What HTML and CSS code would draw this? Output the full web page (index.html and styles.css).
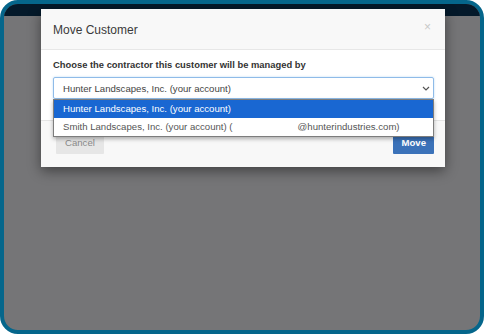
FILE: index.html
```html
<!DOCTYPE html>
<html lang="en">
<head>
    <meta charset="UTF-8">
    <title>Move Customer</title>
    <link rel="stylesheet" href="styles.css">
</head>
<body>
<div class="frame">
    <div class="navbar"></div>

    <div class="modal">
        <div class="modal-header">
            <h4 class="modal-title">Move Customer</h4>
            <span class="close">&times;</span>
        </div>
        <div class="modal-body">
            <label class="label">Choose the contractor this customer will be managed by</label>
            <div class="select">
                <span class="select-text">Hunter Landscapes, Inc. (your account)</span>
                <svg class="chevron" width="8" height="5" viewBox="0 0 8 5">
                    <path d="M1 1 L4 4 L7 1" fill="none" stroke="#555" stroke-width="1.2"/>
                </svg>
                <ul class="options">
                    <li class="option selected">Hunter Landscapes, Inc. (your account)</li>
                    <li class="option">Smith Landscapes, Inc. (your account) (<span class="blank"></span>@hunterindustries.com)</li>
                </ul>
            </div>
        </div>
        <div class="modal-footer">
            <button class="btn btn-default">Cancel</button>
            <button class="btn btn-primary">Move</button>
        </div>
    </div>
</div>
</body>
</html>
```

FILE: styles.css
```css
* {
    box-sizing: border-box;
}
body {
    margin: 0;
    font-family: "Liberation Sans", Arial, sans-serif;
}
.frame {
    position: relative;
    width: 484px;
    height: 334px;
    border: 4px solid #05668b;
    border-radius: 18px;
    background: #757577;
    overflow: hidden;
}
.navbar {
    height: 12px;
    background: #04192a;
}

.modal {
    position: absolute;
    left: 37px;
    top: 5px;
    width: 404px;
    background: #fff;
    box-shadow: 0 4px 12px rgba(0, 0, 0, .45);
}
.modal-header {
    height: 41px;
    padding: 0 12px;
    display: flex;
    align-items: center;
    justify-content: space-between;
    background: #f8f8f8;
    border-bottom: 1px solid #e7e7e7;
}
.modal-title {
    margin: 0;
    font-size: 12px;
    font-weight: normal;
    color: #3a3a3a;
    padding-top: 1px;
}
.close {
    color: #c8c8c8;
    font-size: 12px;
    margin-right: 2px;
    margin-top: -4px;
}

.modal-body {
    height: 70px;
    padding: 8px 11px 0 12px;
}
.label {
    display: block;
    font-size: 9.4px;
    font-weight: bold;
    color: #333;
    line-height: 13px;
    margin-bottom: 6px;
}
.select {
    position: relative;
    height: 22px;
    border: 1px solid #8fbbe8;
    border-radius: 2px;
    box-shadow: 0 0 2px rgba(102, 175, 233, .5);
    display: flex;
    align-items: center;
    padding-left: 9px;
    font-size: 9.6px;
    color: #444;
}
.select-text {
    flex: 1;
}
.chevron {
    margin-right: 3px;
}
.options {
    position: absolute;
    top: 21px;
    left: -1px;
    right: -1px;
    margin: 0;
    padding: 0;
    list-style: none;
    background: #fff;
    border: 1px solid #7d7d7d;
    box-shadow: 0 2px 4px rgba(0, 0, 0, .3);
    z-index: 2;
}
.option {
    height: 18px;
    line-height: 18px;
    padding-left: 9px;
    font-size: 9.6px;
    color: #555;
}
.option.selected {
    background: #1967d2;
    color: #fff;
}
.blank {
    display: inline-block;
    width: 65px;
}

.modal-footer {
    height: 47px;
    padding: 9px 11px 0 15px;
    display: flex;
    justify-content: space-between;
    align-items: flex-start;
    background: #f8f8f8;
    border-top: 1px solid #e5e5e5;
}
.btn {
    height: 24px;
    border: 0;
    border-radius: 1px;
    font-family: "Liberation Sans", Arial, sans-serif;
    font-size: 9.6px;
    padding: 0 9px;
}
.btn-default {
    background: #e6e6e6;
    color: #8a8a8a;
}
.btn-primary {
    background: #3b72b9;
    color: #fff;
    font-weight: bold;
    padding: 0 8px;
}
```
